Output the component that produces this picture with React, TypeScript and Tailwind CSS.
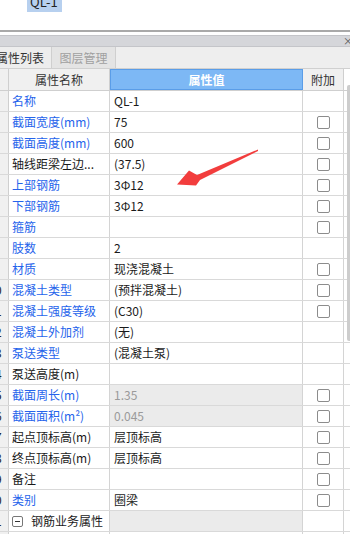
import React from "react";

type Row = {
  name: string;
  value?: string;
  blue?: boolean;
  check?: boolean;
  grayValue?: boolean;
  group?: boolean;
};

const rows: Row[] = [
  { name: "名称", value: "QL-1", blue: true },
  { name: "截面宽度(mm)", value: "75", blue: true, check: true },
  { name: "截面高度(mm)", value: "600", blue: true, check: true },
  { name: "轴线距梁左边...", value: "(37.5)", check: true },
  { name: "上部钢筋", value: "3Φ12", blue: true, check: true },
  { name: "下部钢筋", value: "3Φ12", blue: true, check: true },
  { name: "箍筋", value: "", blue: true, check: true },
  { name: "肢数", value: "2", blue: true },
  { name: "材质", value: "现浇混凝土", blue: true, check: true },
  { name: "混凝土类型", value: "(预拌混凝土)", blue: true, check: true },
  { name: "混凝土强度等级", value: "(C30)", blue: true, check: true },
  { name: "混凝土外加剂", value: "(无)", blue: true },
  { name: "泵送类型", value: "(混凝土泵)", blue: true },
  { name: "泵送高度(m)", value: "" },
  { name: "截面周长(m)", value: "1.35", blue: true, check: true, grayValue: true },
  { name: "截面面积(m²)", value: "0.045", blue: true, check: true, grayValue: true },
  { name: "起点顶标高(m)", value: "层顶标高", check: true },
  { name: "终点顶标高(m)", value: "层顶标高", check: true },
  { name: "备注", value: "", check: true },
  { name: "类别", value: "圈梁", blue: true, check: true },
  { name: "钢筋业务属性", value: "", grayValue: true, group: true },
  { name: "", value: "" },
];

function CheckBox() {
  return <div className="w-[13px] h-[13px] border border-[#8c8c8c] rounded-[2px] bg-white" />;
}

function TableRow({ row, index }: { row: Row; index: number }) {
  return (
    <div className="flex h-[21px] border-b border-[#d9d9d9]">
      {/* index column, clipped on the left */}
      <div className="w-[9px] shrink-0 overflow-hidden bg-[#f0f0f0] border-r border-[#cfcfcf] flex items-center">
        <div className="w-[26px] shrink-0 -ml-[18px] text-center text-[#222]">{index}</div>
      </div>
      <div
        className={
          "w-[101px] shrink-0 border-r border-[#d4d4d4] flex items-center pl-[3px] whitespace-nowrap overflow-hidden " +
          (row.blue ? "text-[#2563eb]" : "text-[#1a1a1a]")
        }
      >
        {row.group && (
          <span className="w-[11px] h-[11px] border border-[#777] rounded-[2px] flex items-center justify-center mr-[8px] shrink-0">
            <span className="w-[5px] h-px bg-[#333]" />
          </span>
        )}
        {row.name}
      </div>
      <div
        className={
          "w-[193px] shrink-0 border-r border-[#d4d4d4] flex items-center pl-[4px] whitespace-nowrap " +
          (row.grayValue ? "bg-[#ebebeb] text-[#9a9a9a]" : "text-[#1a1a1a]")
        }
      >
        {row.value}
      </div>
      <div className="w-[41px] shrink-0 border-r border-[#d4d4d4] flex items-center justify-center">
        {row.check && <CheckBox />}
      </div>
      <div className="flex-1" />
    </div>
  );
}

export default function App() {
  return (
    <div
      className="relative w-[350px] h-[534px] overflow-hidden bg-white text-[12px] leading-none"
      style={{ fontFamily: '"Noto Sans CJK SC", "Noto Sans", sans-serif' }}
    >
      {/* top area with selected item */}
      <div className="h-[30px] bg-white">
        <div className="ml-[27px] w-[35px] h-[12px] bg-[#b7d0ef] overflow-hidden">
          <div className="-mt-[5px] pl-[3px] text-[13px] text-[#222]">QL-1</div>
        </div>
      </div>
      <div className="h-[2px] bg-[#a9a9a9]" />
      <div className="h-[3px] bg-white" />

      {/* panel title bar */}
      <div className="h-[12px] bg-[#d5d6da] border-y border-[#c4c5c9] flex justify-end items-center overflow-hidden">
        <span className="text-[10px] text-[#555] -mr-[3px]">×</span>
      </div>

      {/* tabs */}
      <div className="h-[22px] bg-[#eeeeee] flex border-b border-[#d0d0d0]">
        <div className="w-[52px] h-full flex items-center justify-end pr-[7px] bg-[#ededed] border-r border-[#cfcfcf] text-[#333] whitespace-nowrap overflow-hidden">
          <span className="shrink-0">属性列表</span>
        </div>
        <div className="w-[64px] h-full flex items-center justify-center bg-[#e4e4e4] border-r border-[#cfcfcf] text-[#a0a0a0]">
          图层管理
        </div>
      </div>

      {/* table header */}
      <div className="flex h-[22px] border-b border-[#cfcfcf]">
        <div className="w-[9px] shrink-0 bg-[#f0f0f0] border-r border-[#cfcfcf]" />
        <div className="w-[101px] shrink-0 bg-[#f0f0f0] border-r border-[#cfcfcf] flex items-center justify-center text-[#333]">
          属性名称
        </div>
        <div className="w-[193px] shrink-0 bg-[#7db8f5] border border-[#5a9de8] flex items-center justify-center text-white font-semibold">
          属性值
        </div>
        <div className="w-[41px] shrink-0 bg-[#f0f0f0] border-r border-[#cfcfcf] flex items-center justify-center text-[#333]">
          附加
        </div>
        <div className="flex-1" />
      </div>

      {rows.map((r, i) => (
        <TableRow key={i} row={r} index={i + 1} />
      ))}

      {/* scrollbar thumb */}
      <div className="absolute left-[347px] top-[85px] w-[3px] h-[256px] bg-[#cdcdcd] rounded-l-[2px]" />

      {/* red annotation arrow */}
      <svg className="absolute inset-0 pointer-events-none" width="350" height="534" viewBox="0 0 350 534">
        <polygon
          points="258,149.5 197,175 189,170.5 177,184.5 196,185.5 200,180 258,151"
          fill="#f23d3d"
        />
      </svg>
    </div>
  );
}
